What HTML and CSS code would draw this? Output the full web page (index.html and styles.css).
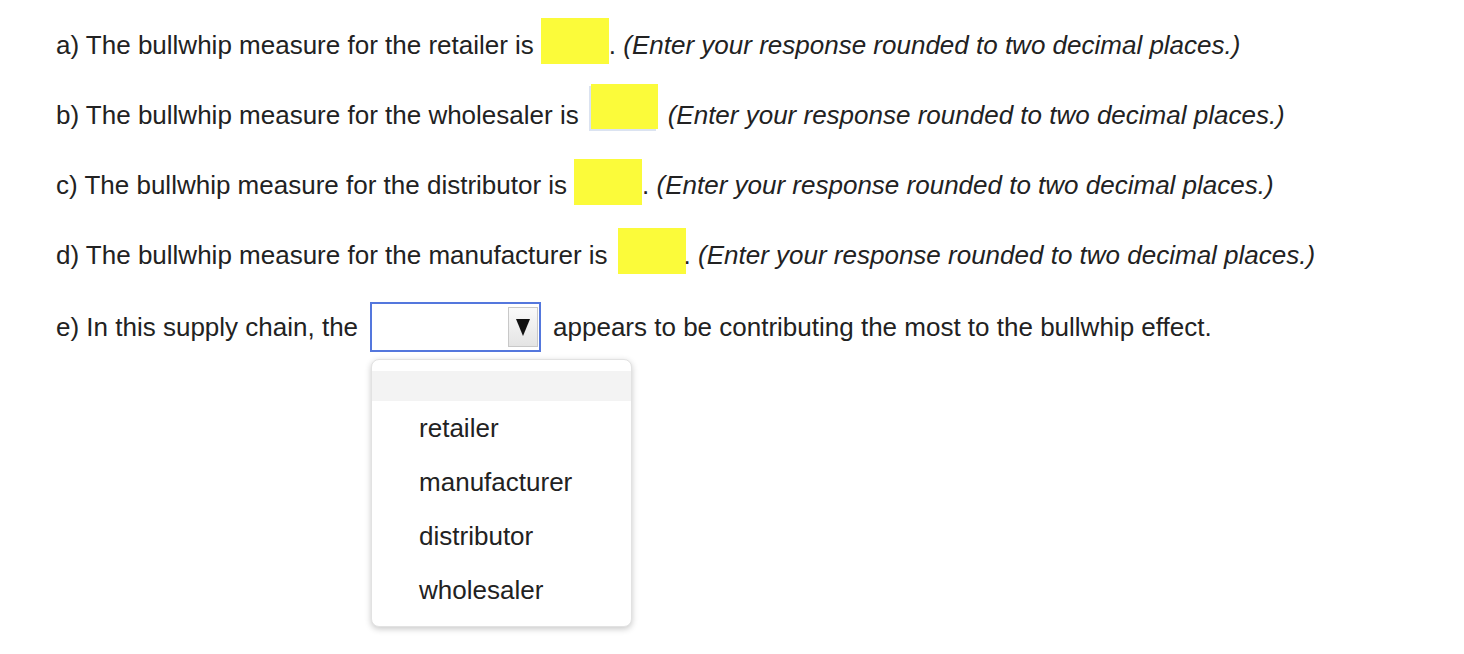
FILE: index.html
```html
<!DOCTYPE html>
<html lang="en">
<head>
<meta charset="utf-8">
<title>Bullwhip measure</title>
<link rel="stylesheet" href="styles.css">
</head>
<body>
<div class="page">
  <div class="row row-a">
    <span class="txt">a) The bullwhip measure for the retailer is</span>
    <span class="ans ans-a"></span>
    <span class="hint"><span class="dot">.</span> <em>(Enter your response rounded to two decimal places.)</em></span>
  </div>
  <div class="row row-b">
    <span class="txt">b) The bullwhip measure for the wholesaler is</span>
    <span class="ans ans-b"></span>
    <span class="hint hint-b"><em>(Enter your response rounded to two decimal places.)</em></span>
  </div>
  <div class="row row-c">
    <span class="txt">c) The bullwhip measure for the distributor is</span>
    <span class="ans ans-c"></span>
    <span class="hint"><span class="dot">.</span> <em>(Enter your response rounded to two decimal places.)</em></span>
  </div>
  <div class="row row-d">
    <span class="txt">d) The bullwhip measure for the manufacturer is</span>
    <span class="ans ans-d"></span>
    <span class="hint hint-d"><span class="dot">.</span> <em>(Enter your response rounded to two decimal places.)</em></span>
  </div>
  <div class="row row-e">
    <span class="txt">e) In this supply chain, the</span>
    <div class="select-wrap">
      <div class="select">
        <span class="select-btn"><svg width="14" height="17" viewBox="0 0 14 17"><polygon points="0,0 14,0 7,17" fill="#111"/></svg></span>
      </div>
      <ul class="menu">
        <li class="opt opt-blank"></li>
        <li class="opt">retailer</li>
        <li class="opt">manufacturer</li>
        <li class="opt">distributor</li>
        <li class="opt">wholesaler</li>
      </ul>
    </div>
    <span class="txt after">appears to be contributing the most to the bullwhip effect.</span>
  </div>
</div>
</body>
</html>
```

FILE: styles.css
```css
html, body {
  margin: 0;
  padding: 0;
  background: #ffffff;
}
body {
  font-family: "Liberation Sans", Arial, Helvetica, sans-serif;
  font-size: 26px;
  color: #222222;
  min-height: 654px;
}
.page {
  padding: 10px 0 0 56px;
  min-height: 644px;
}
.row {
  display: flex;
  align-items: center;
  height: 70px;
  white-space: nowrap;
}
.txt {
  line-height: 30px;
}
.ans {
  display: inline-block;
  width: 68px;
  height: 46px;
  background: #fbfb3a;
  margin-left: 7px;
  margin-bottom: 8px;
}
.ans-b {
  width: 67px;
  height: 45px;
  margin-left: 12px;
  margin-bottom: 17px;
  box-shadow: -2px 2px 0 #dbe3f1;
}
.ans-c {
  margin-bottom: 6px;
}
.ans-d {
  margin-left: 10px;
  margin-bottom: 8px;
}
.hint {
  line-height: 30px;
}
.hint-b {
  margin-left: 10px;
}
.hint-d .dot {
  margin-left: -2px;
}
.hint em {
  font-style: italic;
}
.row-e {
  margin-top: 2px;
}
.select-wrap {
  position: relative;
  margin: 0 12px 0 12px;
}
.select {
  box-sizing: border-box;
  width: 171px;
  height: 50px;
  border: 2px solid #5477dd;
  background: #ffffff;
  display: flex;
  justify-content: flex-end;
  align-items: center;
  padding-right: 1px;
}
.select-btn {
  box-sizing: border-box;
  width: 30px;
  height: 40px;
  border: 1px solid #c8c8c8;
  background: linear-gradient(#fafafa, #e4e4e4);
  display: flex;
  align-items: center;
  justify-content: center;
}
.select-btn svg {
  display: block;
}
.menu {
  position: absolute;
  left: 1px;
  top: 57px;
  box-sizing: border-box;
  width: 261px;
  height: 268px;
  margin: 0;
  padding: 11px 0;
  list-style: none;
  background: #ffffff;
  border: 1px solid #e2e2e2;
  border-radius: 8px;
  box-shadow: 0 2px 6px rgba(0, 0, 0, 0.22);
  z-index: 5;
}
.opt {
  height: 54px;
  line-height: 54px;
  padding-left: 47px;
  color: #222222;
}
.opt-blank {
  height: 30px;
  background: #f3f3f3;
}
```
